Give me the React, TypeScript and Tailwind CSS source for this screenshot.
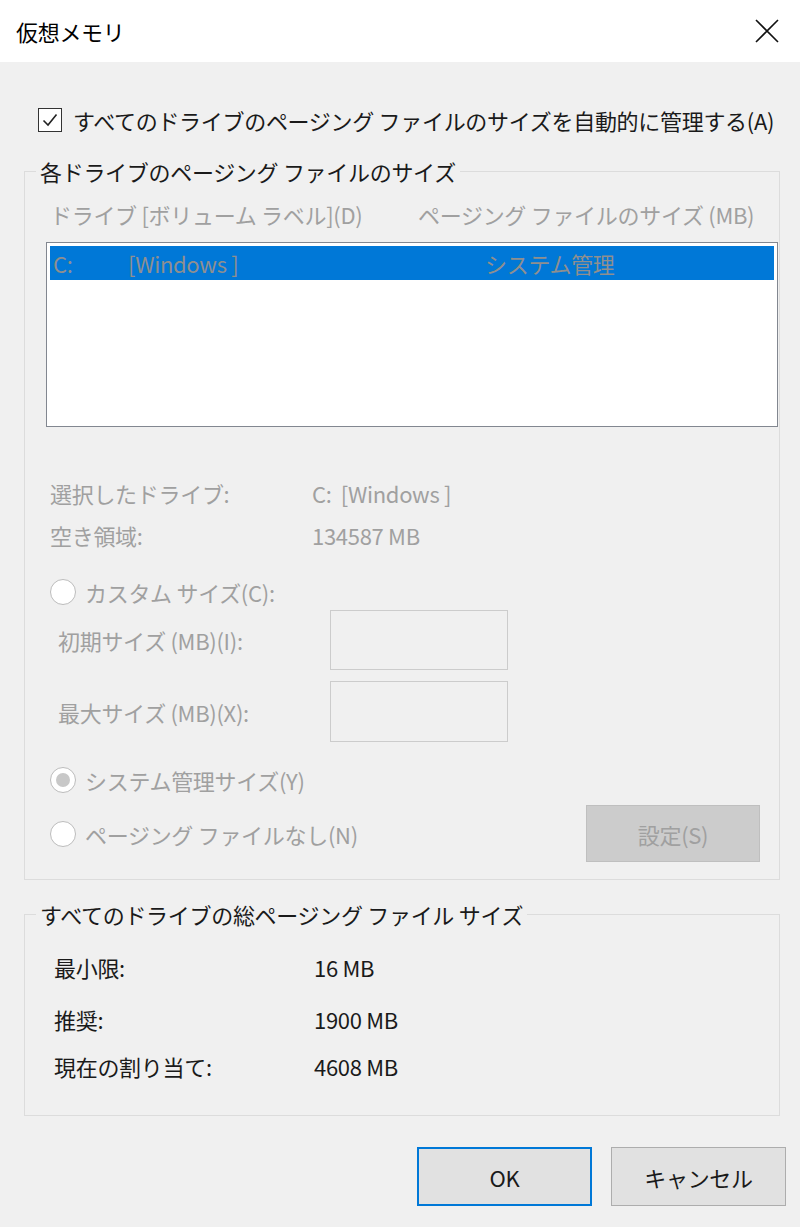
import React from 'react';

const DIS = 'text-[#a0a0a0]';

function Radio({ checked = false }: { checked?: boolean }) {
  return (
    <span className="w-[26px] h-[26px] rounded-full border border-[#bcbcbc] bg-white flex items-center justify-center shrink-0">
      {checked && <span className="w-[14px] h-[14px] rounded-full bg-[#c8c8c8]" />}
    </span>
  );
}

function InfoRow({ label, value, mt }: { label: string; value: string; mt: string }) {
  return (
    <div className={`flex items-center h-[30px] ${mt}`}>
      <span className="w-[289px] pl-[29px]">{label}</span>
      <span>{value}</span>
    </div>
  );
}

export default function App() {
  return (
    <div className="w-[800px] h-[1227px] bg-[#f0f0f0] text-[22px] leading-none tracking-[-0.3px] text-[#1a1a1a] font-['Noto_Sans_CJK_JP','Noto_Sans_CJK_SC',sans-serif] overflow-hidden">
      {/* Title bar */}
      <div className="h-[62px] bg-white flex items-center justify-between pl-[16px] pr-[20px]">
        <span className="text-[22px] text-black">仮想メモリ</span>
        <svg width="24" height="24" viewBox="0 0 24 24" className="mr-[1px]">
          <path d="M1 1 L23 23 M23 1 L1 23" stroke="#111" strokeWidth="1.6" fill="none" />
        </svg>
      </div>

      {/* Auto manage checkbox */}
      <div className="flex items-center h-[30px] mt-[43px] pl-[38px] gap-[11px]">
        <span className="w-[24px] h-[24px] border border-[#333] bg-white flex items-center justify-center">
          <svg width="18" height="18" viewBox="0 0 18 18">
            <path d="M2.5 9.5 L7 14 L15.5 3.5" stroke="#222" strokeWidth="1.6" fill="none" />
          </svg>
        </span>
        <span>すべてのドライブのページング ファイルのサイズを自動的に管理する(A)</span>
      </div>

      {/* Per-drive group */}
      <fieldset className="mt-[21px] ml-[24px] w-[756px] border border-[#dcdcdc] px-0 pb-[17px]">
        <legend className="ml-[11px] px-[4px] h-[30px] flex items-center">各ドライブのページング ファイルのサイズ</legend>

        <div className={`flex items-center h-[30px] mt-[13px] ${DIS}`}>
          <span className="w-[393px] pl-[25px]">ドライブ [ボリューム ラベル](D)</span>
          <span>ページング ファイルのサイズ (MB)</span>
        </div>

        <div className="mt-[13px] ml-[21px] mr-[1px] h-[185px] border border-[#828790] bg-white p-[3px]">
          <div className="h-[34px] bg-[#0078d7] flex items-center text-[#8f8f8f]">
            <span className="w-[78px] pl-[3px]">C:</span>
            <span className="w-[357px]">[Windows ]</span>
            <span>システム管理</span>
          </div>
        </div>

        <div className={`flex items-center h-[30px] mt-[51px] ${DIS}`}>
          <span className="w-[287px] pl-[25px]">選択したドライブ:</span>
          <span>C:&nbsp; [Windows ]</span>
        </div>
        <div className={`flex items-center h-[30px] mt-[12px] ${DIS}`}>
          <span className="w-[287px] pl-[25px]">空き領域:</span>
          <span>134587 MB</span>
        </div>

        <div className={`flex items-center h-[30px] mt-[27px] pl-[25px] gap-[9px] ${DIS}`}>
          <Radio />
          <span>カスタム サイズ(C):</span>
        </div>

        <div className={`flex items-center mt-[3px] ${DIS}`}>
          <span className="w-[305px] pl-[33px]">初期サイズ (MB)(I):</span>
          <span className="w-[178px] h-[60px] border border-[#cccccc]" />
        </div>
        <div className={`flex items-center mt-[11px] ${DIS}`}>
          <span className="w-[305px] pl-[33px]">最大サイズ (MB)(X):</span>
          <span className="w-[178px] h-[61px] border border-[#cccccc]" />
        </div>

        <div className={`flex items-center h-[30px] mt-[23px] pl-[25px] gap-[9px] ${DIS}`}>
          <Radio checked />
          <span>システム管理サイズ(Y)</span>
        </div>

        <div className={`flex items-center h-[57px] mt-[10px] pl-[25px] pr-[19px] ${DIS}`}>
          <Radio />
          <span className="ml-[9px]">ページング ファイルなし(N)</span>
          <span className="ml-auto w-[174px] h-[57px] bg-[#cccccc] border border-[#bfbfbf] flex items-center justify-center">
            設定(S)
          </span>
        </div>
      </fieldset>

      {/* Totals group */}
      <fieldset className="mt-[19px] ml-[24px] w-[756px] border border-[#dcdcdc] px-0 pb-[34px]">
        <legend className="ml-[11px] px-[4px] h-[30px] flex items-center">すべてのドライブの総ページング ファイル サイズ</legend>
        <InfoRow label="最小限:" value="16 MB" mt="mt-[23px]" />
        <InfoRow label="推奨:" value="1900 MB" mt="mt-[22px]" />
        <InfoRow label="現在の割り当て:" value="4608 MB" mt="mt-[17px]" />
      </fieldset>

      {/* Buttons */}
      <div className="flex justify-end gap-[19px] mt-[31px] pr-[14px]">
        <button className="w-[175px] h-[59px] bg-[#e1e1e1] border-2 border-[#0078d7] text-[#1a1a1a]">OK</button>
        <button className="w-[175px] h-[59px] bg-[#e1e1e1] border border-[#adadad] text-[#1a1a1a]">キャンセル</button>
      </div>
    </div>
  );
}
